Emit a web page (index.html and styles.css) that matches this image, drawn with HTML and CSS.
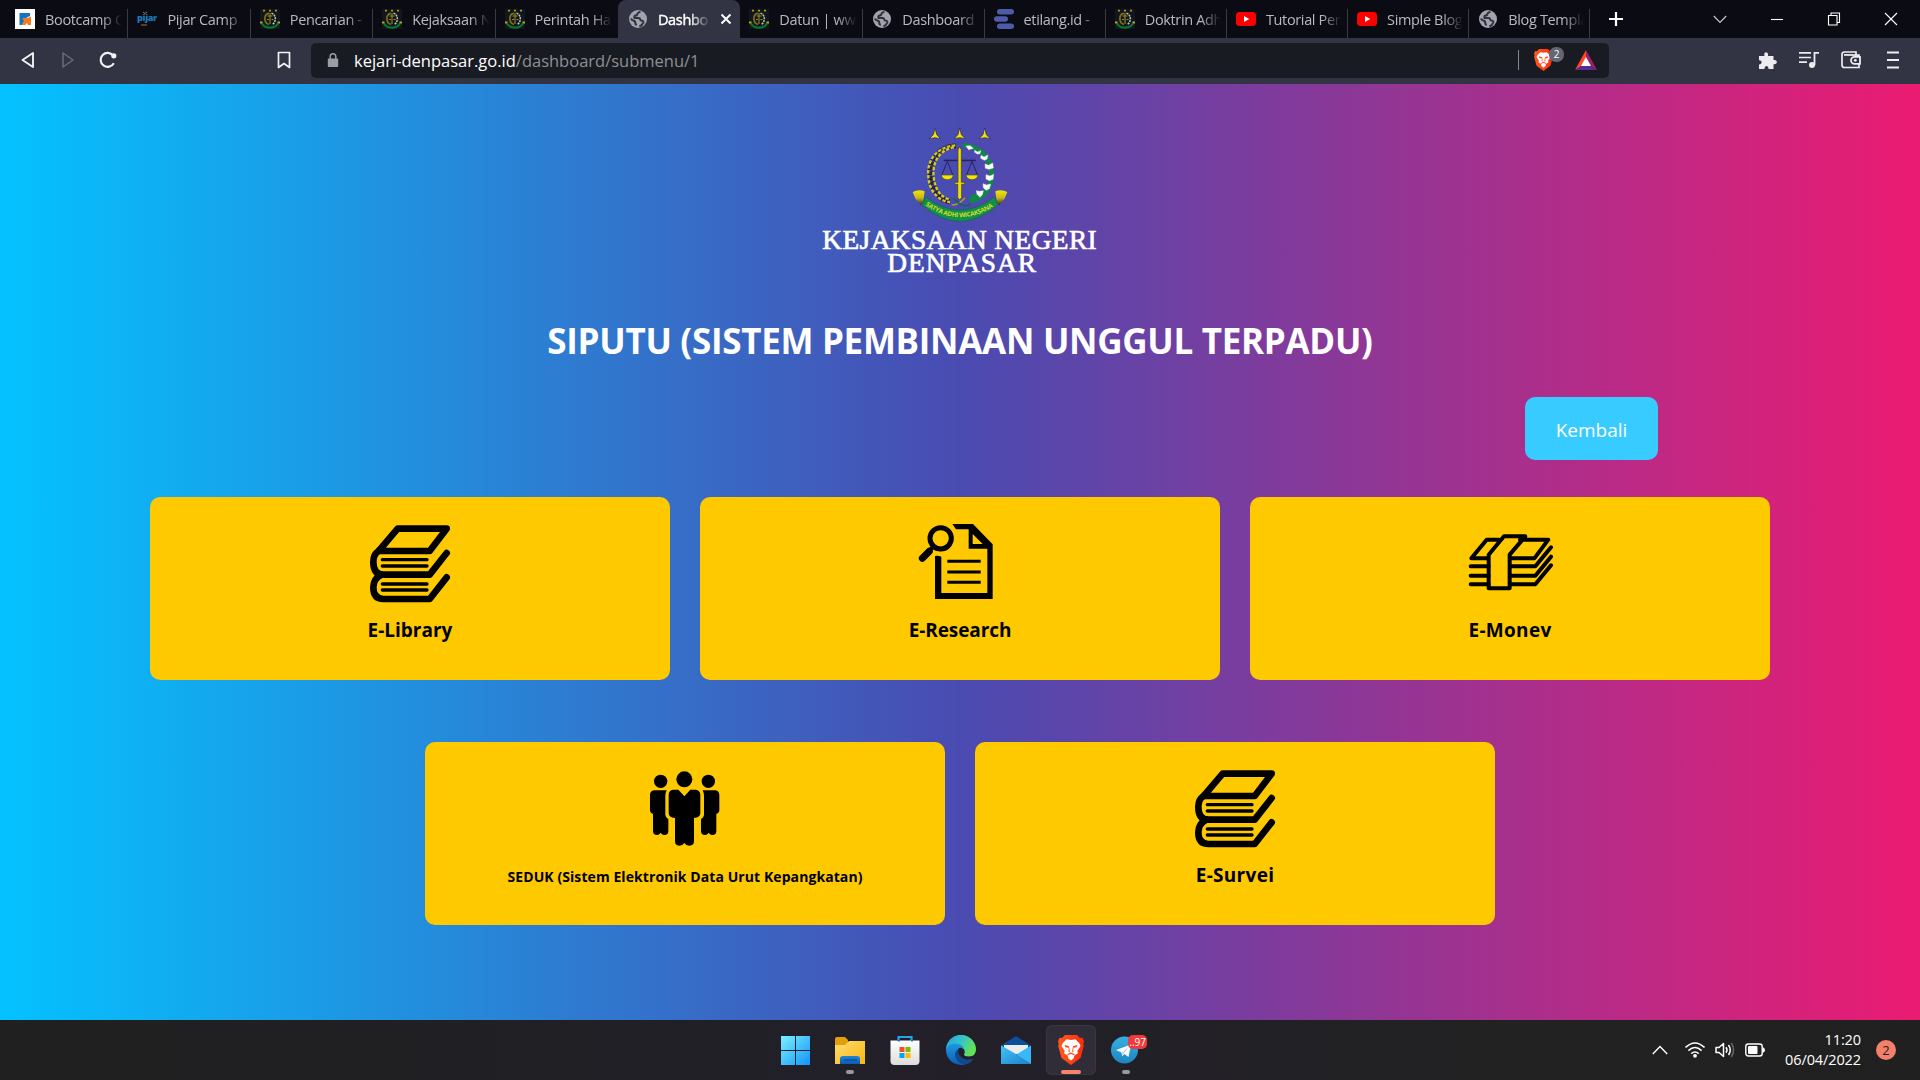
FILE: index.html
```
<!DOCTYPE html>
<html lang="id">
<head>
<meta charset="utf-8">
<title>Dashboard</title>
<link rel="stylesheet" href="styles.css">
</head>
<body>
<svg class="defs" aria-hidden="true">
  <defs>
    <linearGradient id="gwin" x1="0" y1="0" x2="1" y2="1"><stop offset="0" stop-color="#7df0ff"/><stop offset="1" stop-color="#1193fb"/></linearGradient>
    <linearGradient id="gfolder" x1="0" y1="0" x2="1" y2="1"><stop offset="0" stop-color="#ffdc72"/><stop offset="1" stop-color="#f7b70f"/></linearGradient>
    <linearGradient id="gblue" x1="0" y1="0" x2="0" y2="1"><stop offset="0" stop-color="#1d86d8"/><stop offset="1" stop-color="#0a5db0"/></linearGradient>
    <linearGradient id="gbag" x1="0" y1="0" x2="0" y2="1"><stop offset="0" stop-color="#fff"/><stop offset="1" stop-color="#dcdcdc"/></linearGradient>
    <linearGradient id="gedge" x1="0" y1="0" x2="1" y2="0.4"><stop offset="0" stop-color="#1fa3dc"/><stop offset=".5" stop-color="#35c0d0"/><stop offset="1" stop-color="#62e356"/></linearGradient>
    <linearGradient id="gedge2" x1="0" y1="0" x2="0" y2="1"><stop offset="0" stop-color="#1b9ae0"/><stop offset="1" stop-color="#0c5cb8"/></linearGradient>
    <linearGradient id="gmail" x1="0" y1="0" x2="1" y2="1"><stop offset="0" stop-color="#45c3f7"/><stop offset="1" stop-color="#1b80cf"/></linearGradient>
    <linearGradient id="gbrave" x1="0" y1="0" x2="1" y2="0"><stop offset="0" stop-color="#ff5a1c"/><stop offset="1" stop-color="#ff2a0c"/></linearGradient>
    <linearGradient id="gtele" x1="0" y1="0" x2="0" y2="1"><stop offset="0" stop-color="#38afe3"/><stop offset="1" stop-color="#1c86c0"/></linearGradient>
    <linearGradient id="gscroll" x1="0" y1="0" x2="0" y2="1"><stop offset="0" stop-color="#f3e600"/><stop offset=".5" stop-color="#c9b91a"/><stop offset="1" stop-color="#2c2516"/></linearGradient>
    <symbol id="seal" viewBox="0 0 20 20">
      <rect width="20" height="20" fill="#14161f"/>
      <path d="M3 1.600h2M9 1.600h2M15 1.600h2" stroke="#a89c10" stroke-width="1.600"/>
      <path d="M9 4.300C3.500 5 3.500 14 9 15.500" fill="none" stroke="#77701a" stroke-width="1.700"/>
      <path d="M11.500 4.300C16.500 5.500 16.500 13.500 12 15.500" fill="none" stroke="#b6cfba" stroke-width="1.500" stroke-dasharray="2 .8"/>
      <path d="M10 4v11M7.500 7h5M7 10.500h2M11.500 10.500h2" stroke="#958b16" stroke-width="1.100"/>
      <path d="M2 14.500C5 20 15 20 18 14.500" fill="none" stroke="#08742d" stroke-width="2.200"/>
      <path d="M0 13.500h2.500M17.500 13.500H20" stroke="#b5a812" stroke-width="1.800"/>
    </symbol>
    <symbol id="globe" viewBox="0 0 20 20">
      <circle cx="10" cy="10" r="9" fill="#a2a4ad"/>
      <path d="M12.500 2.700Q10 3 9.500 4.800q-.3 1.700-2 1.800-1.500.4-1 2.400h4q1.500 0 1.700 1.500.3 1.300 2 1.300 1.500.2 1 2-.8 2.500-3.800 3.700M3 9.500q.5 1.700 2.200 2 2 .3 2 2.300 0 1.800 1.600 2.200" fill="none" stroke="#30323f" stroke-width="2.100"/>
    </symbol>
    <symbol id="youtube" viewBox="0 0 20 20"><rect y="3" width="20" height="14" rx="3.500" fill="#f00"/><path d="M8 7l5.300 3L8 13z" fill="#fff"/></symbol>
    <symbol id="lion" viewBox="0 0 26 30">
      <path d="M7 0h12l3 3 2.500-.2L26 6.500l-.8 2.500.6 2-3.300 12L13 30 3.500 23 .2 11l.6-2L0 6.500l1.500-3.700L4 3z" fill="url(#gbrave)"/>
      <path d="M8.500 4.300L13 5l4.500-.7L21.500 8.500l1 2.500-3.200 5 .6 2.200-3.500 2.400-.8 2.900L13 25.600l-2.600-2.100-.8-2.900-3.500-2.400.6-2.200-3.200-5 1-2.500z" fill="#fff"/>
      <path d="M6.500 10l4.700 1.300-.5 1.500-3.200-.5zM19.500 10l-4.700 1.300.5 1.500 3.200-.5zM10.800 12l-.3 4.500 1.300 1-.5-5zM15.200 12l.3 4.500-1.300 1 .5-5zM9 19.300l4-1.800 4 1.800-1 .8-3-1.200-3 1.200z" fill="#ff431b"/>
    </symbol>
    <symbol id="books" viewBox="60 60 300 270">
      <g fill="none" stroke="#000" stroke-width="20" stroke-linejoin="round" stroke-linecap="round">
        <path d="M173 86H320L269 153H116z"/>
        <path d="M116 153Q100 163 100 185Q100 224 130 224H269L320 159"/>
        <path d="M124 224Q100 236 100 262Q100 297 130 297H269L320 232"/>
        <path d="M127 179H261M127 198H261M127 252H261M127 270H261" stroke-width="10"/>
      </g>
    </symbol>
  </defs>
</svg>

<header class="browser">
  <div class="tabstrip">
    <div class="tabs">
      <div class="tab"><svg class="fav" viewBox="0 0 20 20"><rect width="20" height="20" fill="#fff"/><path d="M4.500 4H15v3l-4 2-4 7H4.500z" fill="#1275bd"/><path d="M16 7.500V16h-3l-1-2-2 2H6.500l2.500-3.500L7.500 9H13z" fill="#f47a20"/></svg><span>Bootcamp C</span></div>
      <div class="tab"><svg class="fav" viewBox="0 0 20 20"><text x="0" y="12" font-family="Open Sans, sans-serif" font-weight="800" font-size="8.800" fill="#1b78b4" textLength="20" lengthAdjust="spacingAndGlyphs">pijar</text><path d="M6 3l2 1.500L10 3M4 16h6" stroke="#b96c2a" fill="none"/></svg><span>Pijar Camp</span></div>
      <div class="tab"><svg class="fav"><use href="#seal"/></svg><span>Pencarian -</span></div>
      <div class="tab"><svg class="fav"><use href="#seal"/></svg><span>Kejaksaan N</span></div>
      <div class="tab last"><svg class="fav"><use href="#seal"/></svg><span>Perintah Ha</span></div>
      <div class="tab active"><svg class="fav"><use href="#globe"/></svg><span>Dashbo</span><svg class="x" viewBox="0 0 12 12"><path d="M1.500 1.500l9 9M10.500 1.500l-9 9" stroke="#fff" stroke-width="2"/></svg></div>
      <div class="tab"><svg class="fav"><use href="#seal"/></svg><span>Datun | www</span></div>
      <div class="tab"><svg class="fav"><use href="#globe"/></svg><span>Dashboard</span></div>
      <div class="tab"><svg class="fav" viewBox="0 0 20 20"><g fill="#4d5ca8"><rect x="3" width="17" height="5.500" rx="2.700"/><rect y="7.300" width="14" height="5.500" rx="2.700"/><rect x="3" y="14.500" width="17" height="5.500" rx="2.700"/></g></svg><span>etilang.id -</span></div>
      <div class="tab"><svg class="fav"><use href="#seal"/></svg><span>Doktrin Adh</span></div>
      <div class="tab"><svg class="fav"><use href="#youtube"/></svg><span>Tutorial Pen</span></div>
      <div class="tab"><svg class="fav"><use href="#youtube"/></svg><span>Simple Blog</span></div>
      <div class="tab"><svg class="fav"><use href="#globe"/></svg><span>Blog Templa</span></div>
    </div>
    <svg class="newtab" viewBox="0 0 16 16"><path d="M8 1v14M1 8h14" stroke="#fff" stroke-width="2.200"/></svg>
    <div class="winctl">
      <svg viewBox="0 0 14 14"><path d="M.8 4L7 10.500 13.200 4" fill="none" stroke="#ccc" stroke-width="1.100"/></svg>
      <svg viewBox="0 0 14 14"><path d="M1 7.500h12" stroke="#fff" stroke-width="1.100"/></svg>
      <svg viewBox="0 0 14 14"><path d="M1.500 3.500h8.500v9.500H1.500zM4 3.500V1h8.500v9.500H10" fill="none" stroke="#fff" stroke-width="1.100"/></svg>
      <svg viewBox="0 0 14 14"><path d="M1 1l12 12M13 1L1 13" stroke="#fff" stroke-width="1.100"/></svg>
    </div>
  </div>
  <div class="toolbar">
    <div class="nav">
      <svg viewBox="0 0 18 18"><path d="M14 2v14L3.500 9z" fill="none" stroke="#f2f2f4" stroke-width="1.900" stroke-linejoin="round"/></svg>
      <svg viewBox="0 0 18 18"><path d="M4 2v14L14 9z" fill="none" stroke="#6a6c78" stroke-width="1.500" stroke-linejoin="round"/></svg>
      <svg viewBox="0 0 18 18"><path d="M14.800 12.200A7 7 0 1 1 14.200 4.500" fill="none" stroke="#f2f2f4" stroke-width="2.200"/><circle cx="14.800" cy="4.800" r="2.600" fill="#f2f2f4"/></svg>
    </div>
    <svg class="mark" viewBox="0 0 18 18"><path d="M3.500 1.500h11v15L9 12.500l-5.500 4z" fill="none" stroke="#f2f2f4" stroke-width="1.700" stroke-linejoin="round"/></svg>
    <div class="url">
      <svg class="lock" viewBox="0 0 12 15"><rect x=".8" y="5.500" width="10.400" height="8.500" rx="1" fill="#9b9da5"/><path d="M3.200 6V3.600a2.800 2.800 0 0 1 5.600 0V6" fill="none" stroke="#9b9da5" stroke-width="1.500"/></svg>
      <span class="addr"><b>kejari-denpasar.go.id</b><i>/dashboard/submenu/1</i></span>
      <span class="bar"></span>
      <span class="shield"><svg viewBox="0 0 26 30"><use href="#lion"/></svg><em>2</em></span>
      <svg class="bat" viewBox="0 0 22 20"><path d="M11 0L0 20l11-7z" fill="#ff4724"/><path d="M11 0l11 20-11-7z" fill="#9e1f63"/><path d="M0 20h22l-11-7z" fill="#5a2c92"/><path d="M11 7l5 9H6z" fill="#fff"/></svg>
    </div>
    <div class="ext">
      <svg viewBox="0 0 20 20"><path d="M2 6h5.500C6 1 12 1 11 6h5.500v4c4.500-1 4.500 5 0 4.200V19h-5c.3-4-4.200-4-4 0H2v-4.500c3.500 0 3.500-4.500 0-4.300z" fill="#ededf0"/></svg>
      <svg viewBox="0 0 20 20"><path d="M0 2.800h12M0 7.500h12M0 12.200h8" stroke="#ededf0" stroke-width="1.700"/><path d="M15.500 15V2.800H20" fill="none" stroke="#ededf0" stroke-width="1.800"/><circle cx="13" cy="15" r="3" fill="#ededf0"/></svg>
      <svg viewBox="0 0 20 20"><path d="M18 6.500V5.200L3 4.800M18 13.500v4H3.500Q1 17.500 1 15V4.500Q1 2 3.500 2H15v2.500" fill="none" stroke="#ededf0" stroke-width="1.700"/><path d="M19 6.800h-5.500a3.500 3.500 0 0 0 0 7H19z" fill="none" stroke="#ededf0" stroke-width="1.800"/><circle cx="14.300" cy="10.300" r="1.400" fill="#ededf0"/></svg>
      <svg viewBox="0 0 20 20"><path d="M4 2.500h12M4 10h12M4 17.500h12" stroke="#ededf0" stroke-width="1.900"/></svg>
    </div>
  </div>
</header>

<main class="page">
  <svg class="logo" viewBox="0 0 960 540">
    <g fill="#f5e600" stroke="#26265c" stroke-width="2">
      <path id="st" d="M405 54l5 20 12 12-17-3-17 3 12-12z"/>
      <use href="#st" x="74"/><use href="#st" x="149"/>
    </g>
    <path d="M468 108C410 108 386 160 392 200C396 245 420 270 452 276" fill="none" stroke="#25223e" stroke-width="15" stroke-dasharray="12 3"/>
    <path d="M466 106C402 112 380 160 385 200C388 248 420 274 450 276" fill="none" stroke="#d9cc10" stroke-width="7" stroke-dasharray="10 5"/>
    <path d="M462 112C416 120 396 160 401 200C405 240 424 262 448 268" fill="none" stroke="#d9cc10" stroke-width="7" stroke-dasharray="10 5"/>
    <path d="M490 106C550 110 580 160 574 205C568 245 545 265 510 272" fill="none" stroke="#0d8a45" stroke-width="15"/>
    <path d="M508 268q4-20 30-16l14 4q-8 24-44 18z" fill="#0d8a45"/>
    <g fill="#fff" stroke="#dfe6ee" stroke-width="1.500">
      <path d="M498 108l12-1 10 8-14 4zM524 121l9 5 9-4-2 9-8 1-8-5zM543 136l9 5 12-6-3 12-8 4-11-6zM555 162l11 4 12-7 2 15-13 4-11-3zM558 194l12 4 11-5-2 15-11 4-10-5zM549 221l11 4 12-3-4 14-10 5-8-8zM529 242l10 2 11-2-3 12-7 8-9-9z"/>
    </g>
    <g fill="none" stroke="#23235e" stroke-width="3"><path d="M431 152h96M442 154l-17 42M442 154l17 42M516 154l-17 42M516 154l17 42"/><path d="M432 151h94" stroke-width="4"/></g>
    <path d="M424 195h36q-3 14-18 14t-18-14zM498 195h36q-3 14-18 14t-18-14z" fill="#f5e600" stroke="#55501e" stroke-width="2"/>
    <path d="M479 110l5 9v98h10v6h-9v40l-6 6-6-6v-40h-9v-6h10v-98z" fill="#eadb0c" stroke="#4d481e" stroke-width="2.500"/>
    <path d="M455 285q22 0 40-22" fill="none" stroke="#b1922b" stroke-width="5"/><path d="M460 264q15 20 38 24l14-6" fill="none" stroke="#17625a" stroke-width="5"/>
    <path d="M338 246q18-10 36-2l-4 30-8 12q-6-12-15-18zM622 246q-18-10-36-2l4 30 8 12q6-12 15-18z" fill="url(#gscroll)"/>
    <path d="M377 261Q480 339 583 261L594 285Q480 383 366 285z" fill="#109146" stroke="#1b5a55" stroke-width="2"/>
    <path id="rib" d="M376 286Q480 357 586 286" fill="none"/>
    <text class="motto"><textPath href="#rib" textLength="218">SATYA ADHI WICAKSANA</textPath></text>
    <text class="brand" x="67" y="416" textLength="823">KEJAKSAAN NEGERI</text>
    <text class="brand" x="262" y="487" textLength="446">DENPASAR</text>
  </svg>
  <h1>SIPUTU (SISTEM PEMBINAAN UNGGUL TERPADU)</h1>
  <div class="actions"><a class="back">Kembali</a></div>
  <section class="cards">
    <a class="card"><svg><use href="#books"/></svg><h2>E-Library</h2></a>
    <a class="card"><svg viewBox="60 60 300 270">
      <path d="M187 72h62l59 61v164H135V168q10-2 19 2v109h138V146h-56V88h-38zM248 102v30h30z" fill="#000" fill-rule="evenodd"/>
      <path d="M172 184h100M172 216h100M172 247h100" stroke="#000" stroke-width="9"/>
      <circle cx="152" cy="115" r="32" fill="none" stroke="#000" stroke-width="15"/>
      <path d="M118 154L97 175" stroke="#000" stroke-width="21" stroke-linecap="round"/><path d="M132 138l-10 10" stroke="#000" stroke-width="12"/>
    </svg><h2 class="tight">E-Research</h2></a>
    <a class="card"><svg viewBox="60 60 300 270">
      <g fill="none" stroke="#000" stroke-width="12" stroke-linejoin="round" stroke-linecap="round">
        <path d="M146 175H94l46-56h37M240 119h85l-42 56h-73M146 164l46-55h64l-47 55v101h-63z"/>
        <path d="M92 199h54M92 227h54M92 253h54M210 199h76l47-57M210 227h76l47-57M210 253h76l47-57"/>
      </g>
    </svg><h2 class="wide">E-Monev</h2></a>
    <a class="card"><svg viewBox="435 75 300 270">
      <circle cx="583" cy="118" r="24"/><circle cx="512" cy="124" r="20"/><circle cx="655" cy="124" r="20"/>
      <path d="M549 149h16l18 20 18-20h16q14 2 14 16v54q0 14-19 15v70q0 13-14 13-10 0-15-8-5 8-15 8-13 0-13-13v-70q-19-1-19-15v-54q0-14 13-16z"/>
      <path id="side" d="M492 151h38q-4 8-4 16v58q0 6 9 13v35q0 12-12 12-7 0-11-7-4 7-11 7-12 0-12-12v-51q-9-3-9-11v-46q0-12 12-14z"/>
      <use href="#side" transform="matrix(-1 0 0 1 1168 0)"/>
    </svg><h2 class="small">SEDUK (Sistem Elektronik Data Urut Kepangkatan)</h2></a>
    <a class="card"><svg><use href="#books"/></svg><h2 class="wide">E-Survei</h2></a>
  </section>
</main>

<footer class="taskbar">
  <div class="apps">
    <div class="app"><svg viewBox="0 0 30 30"><path d="M1 1h14v14H1zM16 1h14v14H16zM1 16h14v14H1zM16 16h14v14H16z" fill="url(#gwin)"/></svg></div>
    <div class="app run"><svg viewBox="0 0 30 30"><path d="M0 4q0-2 2-2h8l3 3v6H0z" fill="#e0a00c"/><path d="M0 10h10l4-4h16v23H0z" fill="url(#gfolder)"/><path d="M5 29v-5q0-3 3-3h14q3 0 3 3v5z" fill="url(#gblue)"/><path d="M9 25h13" stroke="#084a92" stroke-width="1.300"/></svg></div>
    <div class="app"><svg viewBox="0 0 30 30"><path d="M8.500 7V2h13v5" fill="none" stroke="#27a4e4" stroke-width="2.200"/><path d="M.5 5.500h29V26q0 4-4 4h-21q-4 0-4-4z" fill="url(#gbag)"/><path d="M8 6V5.500h2M21 5.500h2" stroke="#167fc4" stroke-width="2"/><path d="M9.500 12h5v5h-5z" fill="#f25022"/><path d="M15.500 12h5v5h-5z" fill="#7fba00"/><path d="M9.500 18h5v5h-5z" fill="#00a4ef"/><path d="M15.500 18h5v5h-5z" fill="#ffb900"/></svg></div>
    <div class="app"><svg viewBox="0 0 30 30"><path d="M0 15A15 15 0 0 1 30 14.500Q30 21 23 21.500q-5 0-5-2.200 1.500-2.300 0-4.800Q15 10 10 10 3 10 0 15z" fill="url(#gedge)"/><path d="M0 15Q2 8.500 9 8.500q8 0 9 6-3-3-5.500-1-4.500 5.500 1 11.500 6 5 13.500 0Q22 30 15 30A15 15 0 0 1 0 15z" fill="url(#gedge2)"/><path d="M13 13.500q-5.500 3.500-3.500 9Q12 28.500 18 29.700q6-1.500 9.500-6.200-7 2.500-12-1-5-4.500-2.500-9z" fill="#114a8b"/></svg></div>
    <div class="app"><svg viewBox="0 0 30 30"><path d="M0 10.500L15 1l15 9.500L15 20z" fill="#0b4f9c"/><path d="M3 10h24v9H3z" fill="#ececec"/><path d="M0 10.500L15 19v10H0z" fill="#2fb4f3"/><path d="M0 29V10.500L30 29z" fill="url(#gmail)"/><path d="M30 10.500L15 19.700 30 29z" fill="#38b9f5"/></svg></div>
    <div class="app run current"><svg viewBox="0 0 26 30"><use href="#lion"/></svg></div>
    <div class="app run"><svg viewBox="0 0 30 30"><circle cx="13.500" cy="15" r="13.500" fill="url(#gtele)"/><path d="M5 15l15-5.500-2.500 12.500-4-3-2.300 2.300-.7-3.800z" fill="#fff"/><path d="M10.500 17.500L18 11.500l-5 7-1.500 2.500z" fill="#c3dced"/></svg><em>..97</em></div>
  </div>
  <div class="tray">
    <svg class="up" viewBox="0 0 16 20"><path d="M.8 14L8 6.500l7.200 7.500" fill="none" stroke="#fff" stroke-width="1.400"/></svg>
    <svg class="wifi" viewBox="0 0 20 20"><g fill="none" stroke="#fff" stroke-width="1.600"><path d="M.5 7.500q9.500-9 19 0M3.400 10.600q6.600-6.200 13.200 0M6.300 13.700q3.700-3.400 7.400 0"/></g><circle cx="10" cy="15.800" r="1.900" fill="#fff"/></svg>
    <svg class="vol" viewBox="0 0 20 20"><g fill="none" stroke="#fff" stroke-width="1.500"><path d="M1 7.500h3l4.500-4v13L4 12.500H1z" stroke-linejoin="round"/><path d="M11 7.300q2 2.700 0 5.400M13.500 5q3.500 5 0 10"/><path d="M16.300 3q4.500 7 0 14" stroke="#666"/></g></svg>
    <svg class="batt" viewBox="0 0 20 20"><rect x=".8" y="4" width="16.400" height="12" rx="2.500" fill="none" stroke="#fff" stroke-width="1.400"/><rect x="3" y="6" width="9.500" height="8" rx="1" fill="#fff"/><path d="M17.500 7.500h1q1.500 1 1.500 2.500t-1.500 2.500h-1z" fill="#fff"/></svg>
    <div class="clock"><span>11:20</span><span>06/04/2022</span></div>
    <div class="note">2</div>
  </div>
</footer>
</body>
</html>
```
FILE: styles.css
```
* { box-sizing: border-box; }
body {
  margin: 0;
  width: 1920px;
  height: 1080px;
  overflow: hidden;
  display: flex;
  flex-direction: column;
  font-family: "Open Sans", "Noto Sans", sans-serif;
}
svg { display: block; flex: none; }
.defs { position: absolute; width: 0; height: 0; }

/* browser chrome */
.tabstrip { display: flex; align-items: center; height: 38px; background: #0b0b14; }
.tabs {
  display: grid;
  grid-template-columns: repeat(6, 122.400px) 123px repeat(6, 121.200px);
  height: 38px;
  margin-left: 6px;
}
.tab {
  display: flex;
  align-items: center;
  min-width: 0;
  padding: 0 6px 0 9px;
  color: #b9bac0;
  font-size: 14.500px;
  letter-spacing: -.35px;
  background: linear-gradient(#3b3b42, #3b3b42) right 9px / 1px 29px no-repeat;
}
.tab.last { background: none; }
.tab.active { background: #323443; border-radius: 8px 8px 0 0; color: #fff; padding: 0 8px 0 10px; }
.fav { width: 20px; height: 20px; margin-right: 10px; }
.tab span {
  flex: 1;
  min-width: 0;
  overflow: hidden;
  white-space: nowrap;
  -webkit-mask-image: linear-gradient(to right, #000 calc(100% - 20px), transparent);
  mask-image: linear-gradient(to right, #000 calc(100% - 20px), transparent);
}
.tab.active span { -webkit-text-stroke: .4px #fff; }
.x { width: 12px; height: 12px; margin-left: 10px; }
.newtab { width: 16px; height: 16px; margin-left: 18px; }
.winctl { display: flex; gap: 43px; margin: 0 22px 0 auto; }
.winctl svg { width: 14px; height: 14px; }

.toolbar { display: flex; align-items: center; height: 46px; background: #323443; padding: 0 17px 2px 19px; }
.nav { display: flex; gap: 22px; }
.nav svg, .mark { width: 18px; height: 18px; }
.mark { margin: 0 18px 0 158px; }
.url {
  display: flex;
  align-items: center;
  width: 1298px;
  height: 35px;
  padding: 0 12px 0 16px;
  border-radius: 5px;
  background: #191b22;
}
.lock { width: 12px; height: 15px; margin-right: 15px; }
.addr { flex: 1; font-size: 16.500px; white-space: nowrap; }
.addr b { font-weight: 400; color: #fff; }
.addr i { font-style: normal; color: #8f9096; }
.bar { width: 1px; height: 20px; background: #85868c; margin-right: 15px; }
.shield { position: relative; width: 41px; height: 22px; }
.shield svg { width: 19px; height: 22px; }
.shield em {
  position: absolute;
  left: 15px;
  top: -2px;
  width: 15px;
  height: 15px;
  border-radius: 7px;
  background: #636673;
  color: #fff;
  font: 10px/15px "Open Sans", sans-serif;
  text-align: center;
}
.bat { width: 22px; height: 20px; }
.ext { display: flex; gap: 22px; margin-left: auto; }
.ext svg { width: 20px; height: 20px; }

/* page */
.page {
  display: flex;
  flex-direction: column;
  align-items: center;
  height: 936px;
  padding-top: 26px;
  background: linear-gradient(to right, #04c2ff, #4a4bb1 50%, #ec1b72);
}
.logo { width: 320px; height: 180px; }
.brand { font: 82px "Liberation Serif", serif; fill: #fff; stroke: #fff; stroke-width: 2px; }
.motto { font: bold 19px "Open Sans", sans-serif; fill: #d7dc2a; }
h1 {
  margin: 27px 0 0;
  height: 48px;
  color: #fff;
  font-size: 35px;
  line-height: 48px;
  font-weight: 700;
  letter-spacing: -.3px;
  white-space: nowrap;
}
.actions { display: flex; justify-content: flex-end; width: 1396px; margin: 32px 0 37px; }
.back {
  width: 133px;
  height: 63px;
  border-radius: 10px;
  background: #38cbff;
  color: #fff;
  font-size: 19px;
  line-height: 66px;
  text-align: center;
}
.cards { display: flex; flex-wrap: wrap; justify-content: center; gap: 62px 30px; width: 1640px; }
.card {
  display: flex;
  flex-direction: column;
  align-items: center;
  width: 520px;
  height: 183px;
  padding-top: 23px;
  border-radius: 10px;
  background: #ffc900;
  color: #000;
}
.card svg { width: 100px; height: 90px; }
h2 { margin: 5px 0 0; font-size: 19px; line-height: 30px; font-weight: 700; white-space: nowrap; }
h2.tight { letter-spacing: -.1px; }
h2.wide { letter-spacing: .3px; }
h2.small { font-size: 14px; padding-top: 2px; letter-spacing: .08px; }

/* taskbar */
.taskbar {
  display: flex;
  height: 60px;
  align-items: center;
  padding: 0 24px 0 770px;
  background: linear-gradient(to right, #202020, #202024 25%, #221f29 50%, #222 80%, #202020);
}
.apps { display: flex; gap: 5.200px; }
.app {
  position: relative;
  width: 50px;
  height: 50px;
  padding: 10px;
  border-radius: 6px;
}
.app svg { width: 30px; height: 30px; }
.app.run::after {
  content: "";
  position: absolute;
  left: 21px;
  bottom: 1px;
  width: 8px;
  height: 4px;
  border-radius: 2px;
  background: #99989c;
}
.app.current { background: #302d38; box-shadow: inset 0 0 0 1px #393641; }
.app.current::after { left: 15px; width: 20px; background: #f58469; }
.app em {
  position: absolute;
  left: 27px;
  top: 10px;
  width: 19px;
  height: 14px;
  border-radius: 5px;
  background: #f03a3a;
  color: #fff;
  font: 10px/14px "Open Sans", sans-serif;
  text-align: center;
}
.tray { display: flex; align-items: center; margin-left: auto; color: #fff; }
.tray svg { width: 20px; height: 20px; }
.tray .up { width: 16px; margin-right: 17px; }
.tray .wifi, .tray .vol { margin-right: 10px; }
.batt { margin-right: 18px; }
.clock { display: flex; flex-direction: column; align-items: flex-end; width: 78px; font-size: 14.500px; line-height: 20px; letter-spacing: -.1px; }
.note {
  width: 20px;
  height: 20px;
  margin-left: 15px;
  border-radius: 50%;
  background: #f3806a;
  color: #1c1c1c;
  font-size: 13px;
  line-height: 20px;
  text-align: center;
}
```
